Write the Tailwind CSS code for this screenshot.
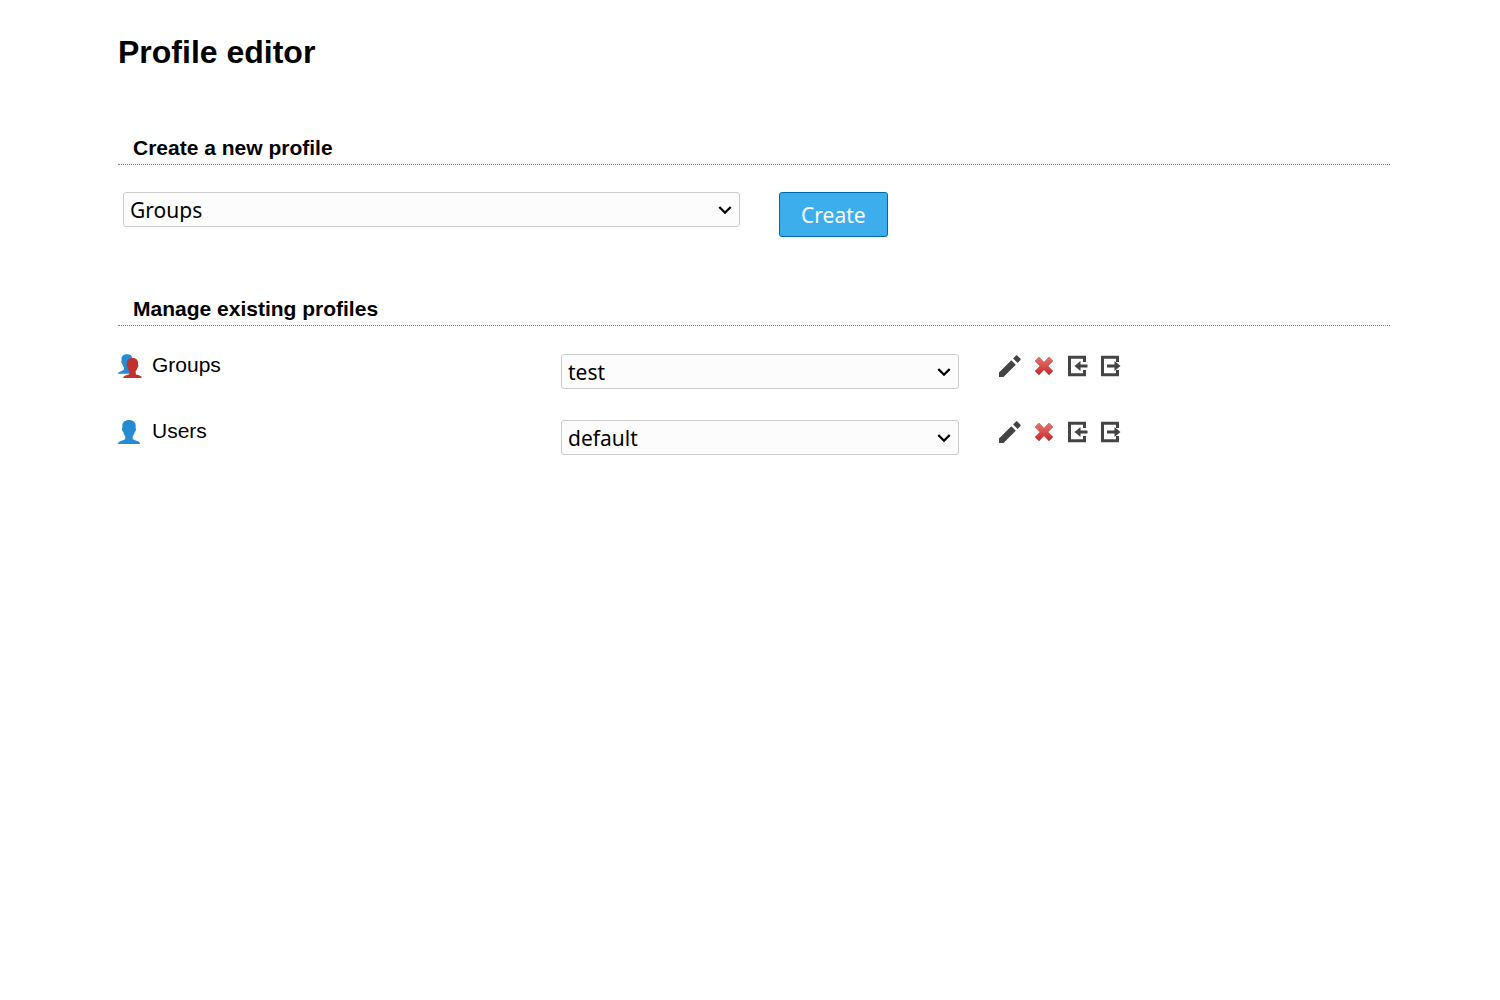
<!DOCTYPE html>
<html lang="en">
<head>
    <meta charset="UTF-8">
    <meta name="viewport" content="width=device-width, initial-scale=1.0">
    <title>Profile editor</title>
    <script src="https://cdn.jsdelivr.net/npm/@tailwindcss/browser@4"></script>
</head>
<body class="bg-white text-black font-['Liberation_Sans',Arial,sans-serif] text-[21px] leading-6">

    <!-- Shared icons -->
    <svg class="hidden" aria-hidden="true">
        <symbol id="icon-person" viewBox="0 0 22 24">
            <path d="M11 0C6.800 0 4.300 2.200 4.300 6c0 1 .1 1.500.1 2-.6.2-.5 1.200-.2 2.200.3 1 .6 1.500 1.100 1.700.4 2 1 3 2 4.100v2.200c0 1.200-1 1.700-3 2.300C2 21.200 0 21.800 0 24h22c0-2.200-2-2.800-4.300-3.500-2-.6-3-1.100-3-2.300V16c1-1.100 1.600-2.100 2-4.100.5-.2.8-.7 1.100-1.700.3-1 .4-2-.2-2.200 0-.5.1-1 .1-2 0-3.800-2.500-6-6.700-6z"/>
        </symbol>
        <symbol id="icon-edit" viewBox="1 0 24 24">
            <path d="M1 18.500V23h4.500L17.800 10.700l-4.500-4.500L1 18.500zM22.300 6.200c.5-.5.5-1.200 0-1.700l-2.800-2.800c-.5-.5-1.200-.5-1.700 0l-2.700 2.700 4.500 4.500 2.700-2.700z"/>
        </symbol>
        <symbol id="icon-delete" viewBox="0 0 24 24">
            <path fill="url(#red-fade)" stroke="#c9403d" stroke-width="0.500" d="M7 3l5 5.200L17 3l4 4-5 5 5 5-4 4-5-5.200L7 21l-4-4 5-5-5-5z"/>
        </symbol>
        <symbol id="icon-import" viewBox="0 0 24 24">
            <path fill="none" stroke="#444" stroke-width="3" d="M19.500 8V3.200h-15v17.600h15V16"/>
            <path d="M9.500 12l6-5v3.500H22.500v3h-7V17z"/>
        </symbol>
        <symbol id="icon-export" viewBox="0 0 24 24">
            <path fill="none" stroke="#444" stroke-width="3" d="M19.500 8V3.200h-15v17.600h15V16"/>
            <path d="M22.500 12l-6-5v3.500H9v3h7.500V17z"/>
        </symbol>
        <symbol id="icon-chevron" viewBox="0 0 14 10">
            <path fill="none" stroke="#000" stroke-width="2.300" d="M1.300 2l5.700 5.700L12.700 2"/>
        </symbol>
    </svg>
    <svg class="absolute size-0" aria-hidden="true">
        <linearGradient id="red-fade" x1="0" y1="0" x2="0" y2="1">
            <stop offset="0" stop-color="#e57370"/>
            <stop offset="0.500" stop-color="#d8504e"/>
            <stop offset="1" stop-color="#c02725"/>
        </linearGradient>
    </svg>

    <main class="pl-[118px] pr-[110px] pt-8">
        <h1 class="text-[32px] leading-10 font-bold">Profile editor</h1>

        <form>
            <h2 class="mt-16 px-[15px] pb-1 font-bold border-b border-dotted border-[#808080]">Create a new profile</h2>
            <div class="mt-[27px] pl-[5px] flex items-start gap-[39px]">
                <div class="relative w-[48.7%]">
                    <select aria-label="Profile type" class="block w-full h-[35px] pl-1.5 pr-8 appearance-none rounded-[3px] border border-[#ccc] bg-[#fcfcfc] font-['Noto_Sans',sans-serif]">
                        <option>Groups</option>
                        <option>Users</option>
                    </select>
                    <svg class="absolute right-2 top-[13px] w-3.5 h-2.5 pointer-events-none"><use href="#icon-chevron"/></svg>
                </div>
                <button type="button" class="h-[45px] px-[21px] rounded-[3px] border border-[#0068a0] bg-[#3daeec] text-white font-['Noto_Sans',sans-serif] hover:bg-[#2a9fe0]">Create</button>
            </div>
        </form>

        <section>
            <h2 class="mt-[60px] px-[15px] pb-1 font-bold border-b border-dotted border-[#808080]">Manage existing profiles</h2>

            <div class="mt-7 grid grid-cols-[443fr_398fr_431fr] gap-y-[31px] items-start">
                <label for="groups-profile" class="flex items-start gap-2.5 leading-[22px]">
                    <svg class="w-6 h-6" viewBox="0 0 24 24">
                        <use href="#icon-person" x="0" y="0" width="18" height="20" fill="#268bd2"/>
                        <use href="#icon-person" x="5" y="4" width="19" height="20" fill="#c0322d"/>
                    </svg>
                    Groups
                </label>
                <div class="relative">
                    <select id="groups-profile" class="block w-full h-[35px] pl-1.5 pr-8 appearance-none rounded-[3px] border border-[#ccc] bg-[#fcfcfc] font-['Noto_Sans',sans-serif]">
                        <option>test</option>
                    </select>
                    <svg class="absolute right-2 top-[13px] w-3.5 h-2.5 pointer-events-none"><use href="#icon-chevron"/></svg>
                </div>
                <div class="flex gap-[9px] pl-10 fill-[#444]">
                    <a href="#" title="Edit"><svg class="size-6 overflow-visible"><use href="#icon-edit"/></svg></a>
                    <a href="#" title="Delete"><svg class="size-6"><use href="#icon-delete"/></svg></a>
                    <a href="#" title="Import profile"><svg class="size-6"><use href="#icon-import"/></svg></a>
                    <a href="#" title="Export profile"><svg class="size-6"><use href="#icon-export"/></svg></a>
                </div>

                <label for="users-profile" class="flex items-start gap-2.5 leading-[22px]">
                    <svg class="w-6 h-6" viewBox="0 0 24 24">
                        <use href="#icon-person" x="0" y="0" width="22" height="24" fill="#268bd2"/>
                    </svg>
                    Users
                </label>
                <div class="relative">
                    <select id="users-profile" class="block w-full h-[35px] pl-1.5 pr-8 appearance-none rounded-[3px] border border-[#ccc] bg-[#fcfcfc] font-['Noto_Sans',sans-serif]">
                        <option>default</option>
                    </select>
                    <svg class="absolute right-2 top-[13px] w-3.5 h-2.5 pointer-events-none"><use href="#icon-chevron"/></svg>
                </div>
                <div class="flex gap-[9px] pl-10 fill-[#444]">
                    <a href="#" title="Edit"><svg class="size-6 overflow-visible"><use href="#icon-edit"/></svg></a>
                    <a href="#" title="Delete"><svg class="size-6"><use href="#icon-delete"/></svg></a>
                    <a href="#" title="Import profile"><svg class="size-6"><use href="#icon-import"/></svg></a>
                    <a href="#" title="Export profile"><svg class="size-6"><use href="#icon-export"/></svg></a>
                </div>
            </div>
        </section>
    </main>

</body>
</html>
